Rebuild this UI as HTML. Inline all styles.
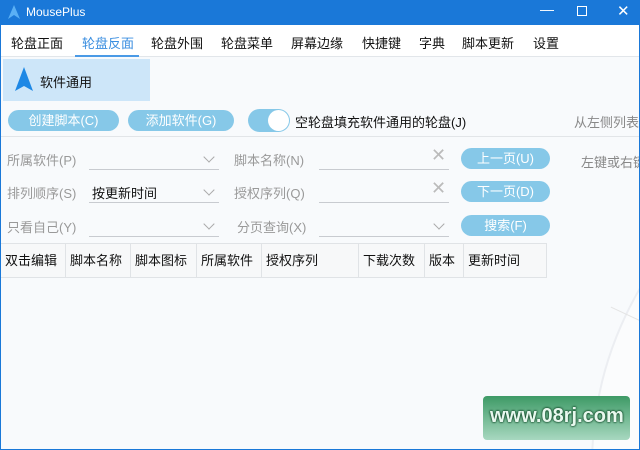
<!DOCTYPE html>
<html><head><meta charset="utf-8"><style>
*{margin:0;padding:0;box-sizing:border-box}
html,body{width:640px;height:450px;overflow:hidden}
body{font-family:"Liberation Sans","Noto Sans CJK SC",sans-serif;background:#1a78d8;position:relative}
.win{position:absolute;left:1px;top:25px;width:638px;height:424px;background:#f8fafc;overflow:hidden}
.t{position:absolute;white-space:nowrap}
.tb{position:absolute;top:0;left:0;width:640px;height:25px;color:#fff;font-size:12px;overflow:hidden}
.tabs{position:absolute;left:0;top:0;width:638px;height:32px;background:#fff;border-bottom:1px solid #e2e6ea}
.tab{position:absolute;top:8px;font-size:13px;color:#111}
.btn{position:absolute;height:21px;border-radius:11px;background:#86c8e8;color:#fff;font-size:13px;text-align:center;line-height:21px}
.lbl{position:absolute;font-size:13px;color:#999}
.line{position:absolute;height:1px;background:#c8cbd0}
.chev{position:absolute;width:8px;height:8px;border-right:1.3px solid #aaa;border-bottom:1.3px solid #aaa;transform:rotate(45deg)}
.x{position:absolute;font-size:18px;color:#bbb}
.th{position:absolute;top:218px;height:35px;border-right:1px solid #e0e3e6;font-size:13px;color:#111;line-height:35px;padding-left:4px}
</style></head><body>
<div class="tb">
<svg style="position:absolute;left:8px;top:5px" width="12" height="14"><path d="M6 0 L12 14 L6 10 L0 14Z" fill="#5ab0f5"/></svg>
<span class="t" style="left:26px;top:5px">MousePlus</span>
<span class="t" style="left:540px;top:1px;font-size:14px">—</span>
<span class="t" style="left:577px;top:6px;width:10px;height:10px;border:1px solid #fff"></span>
<span class="t" style="left:617px;top:2px;font-size:15px">✕</span>
</div>
<div class="win">
<div style="position:absolute;left:590px;top:90px;width:700px;height:700px;border-radius:50%;border:2px solid #eceef2;background:#fbfcfd"></div>
<div style="position:absolute;left:608px;top:290px;width:40px;height:1px;background:#e4e4e4;transform:rotate(25deg)"></div>
<div class="tabs">
<span class="tab" style="left:10px">轮盘正面</span>
<span class="tab" style="left:81px;color:#3a8ee0">轮盘反面</span>
<div style="position:absolute;left:74px;top:30px;width:64px;height:2px;background:#4a9ae6"></div>
<span class="tab" style="left:150px">轮盘外围</span>
<span class="tab" style="left:220px">轮盘菜单</span>
<span class="tab" style="left:290px">屏幕边缘</span>
<span class="tab" style="left:361px">快捷键</span>
<span class="tab" style="left:418px">字典</span>
<span class="tab" style="left:461px">脚本更新</span>
<span class="tab" style="left:532px">设置</span>
</div>
<div style="position:absolute;left:2px;top:34px;width:147px;height:42px;background:#cde6f9"></div>
<svg style="position:absolute;left:14px;top:42px" width="18" height="24"><path d="M9 0 L18 24 L9 19 L0 24Z" fill="#1e88e5"/></svg>
<span class="t" style="left:39px;top:47px;font-size:13px;color:#111">软件通用</span>
<div class="btn" style="left:7px;top:85px;width:111px">创建脚本(C)</div>
<div class="btn" style="left:127px;top:85px;width:106px">添加软件(G)</div>
<div style="position:absolute;left:247px;top:84px;width:42px;height:23px;border-radius:12px;background:#86c8e8"></div>
<div style="position:absolute;left:267px;top:85px;width:21px;height:21px;border-radius:50%;background:#fff"></div>
<span class="t" style="left:294px;top:87px;font-size:13px;color:#111">空轮盘填充软件通用的轮盘(J)</span>
<span class="t" style="left:573px;top:87px;font-size:13px;color:#888">从左侧列表</span>
<div class="line" style="left:0;top:111px;width:638px;background:#e2e5e8"></div>
<span class="lbl" style="left:6px;top:125px">所属软件(P)</span>
<div class="line" style="left:88px;top:144px;width:130px"></div><div class="chev" style="left:204px;top:128px"></div>
<span class="lbl" style="left:233px;top:125px">脚本名称(N)</span>
<div class="line" style="left:318px;top:144px;width:130px"></div><span class="x" style="left:430px;top:120px">✕</span>
<div class="btn" style="left:460px;top:123px;width:89px">上一页(U)</div>
<span class="t" style="left:580px;top:127px;font-size:13px;color:#888">左键或右键</span>
<span class="lbl" style="left:6px;top:158px">排列顺序(S)</span>
<span class="t" style="left:91px;top:158px;font-size:13px;color:#111">按更新时间</span>
<div class="line" style="left:88px;top:177px;width:130px"></div><div class="chev" style="left:204px;top:161px"></div>
<span class="lbl" style="left:233px;top:158px">授权序列(Q)</span>
<div class="line" style="left:318px;top:177px;width:130px"></div><span class="x" style="left:430px;top:153px">✕</span>
<div class="btn" style="left:460px;top:156px;width:89px">下一页(D)</div>
<span class="lbl" style="left:6px;top:192px">只看自己(Y)</span>
<div class="line" style="left:88px;top:211px;width:130px"></div><div class="chev" style="left:204px;top:195px"></div>
<span class="lbl" style="left:236px;top:192px">分页查询(X)</span>
<div class="line" style="left:318px;top:211px;width:130px"></div><div class="chev" style="left:434px;top:195px"></div>
<div class="btn" style="left:460px;top:190px;width:89px">搜索(F)</div>
<div style="position:absolute;left:0;top:218px;width:546px;height:35px;background:#f7f8f9;border-top:1px solid #e0e3e6;border-bottom:1px solid #e0e3e6"></div>
<div class="th" style="left:0;width:65px">双击编辑</div>
<div class="th" style="left:65px;width:65px">脚本名称</div>
<div class="th" style="left:130px;width:66px">脚本图标</div>
<div class="th" style="left:196px;width:65px">所属软件</div>
<div class="th" style="left:261px;width:97px">授权序列</div>
<div class="th" style="left:358px;width:66px">下载次数</div>
<div class="th" style="left:424px;width:39px">版本</div>
<div class="th" style="left:463px;width:83px">更新时间</div>
<div style="position:absolute;left:482px;top:371px;width:147px;height:44px;border-radius:4px;background:linear-gradient(#3e9a66,#a8d8c0);overflow:hidden">
<span class="t" style="left:7px;top:9px;font-size:20px;color:#e8f8ee;font-weight:bold;text-shadow:0 0 2px #0a4020,0 0 2px #0a4020">www.08rj.com</span>
</div>
</div>
</body></html>
